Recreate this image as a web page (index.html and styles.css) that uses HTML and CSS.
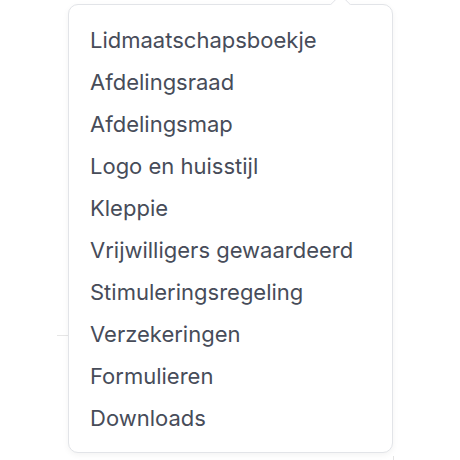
FILE: index.html
```html
<!DOCTYPE html>
<html lang="nl">
<head>
<meta charset="utf-8">
<link rel="stylesheet" href="styles.css">
</head>
<body>
<div class="page">
  <div class="rule"></div>
  <div class="card">
    <p class="card-text">Lidmaatschap</p>
  </div>
</div>
<nav class="dropdown">
  <span class="arrow"></span>
  <ul class="menu">
    <li><a href="#">Lidmaatschapsboekje</a></li>
    <li><a href="#">Afdelingsraad</a></li>
    <li><a href="#">Afdelingsmap</a></li>
    <li><a href="#">Logo en huisstijl</a></li>
    <li><a href="#">Kleppie</a></li>
    <li><a href="#">Vrijwilligers gewaardeerd</a></li>
    <li><a href="#">Stimuleringsregeling</a></li>
    <li><a href="#">Verzekeringen</a></li>
    <li><a href="#">Formulieren</a></li>
    <li><a href="#">Downloads</a></li>
  </ul>
</nav>
</body>
</html>
```
FILE: styles.css
```css
html, body {
  margin: 0;
  padding: 0;
  background: #ffffff;
  font-family: Inter, "Noto Sans", sans-serif;
  overflow: hidden;
  height: 460px;
}
.page {
  padding-top: 335px;
}
.rule {
  margin-left: 57px;
  width: 20px;
  border-top: 1px solid #e6e6e6;
}
.card {
  margin: 4px 0 0 57px;
  width: 337px;
  height: 200px;
  border-right: 1px solid #e3e3e3;
  box-sizing: border-box;
}
.card-text {
  margin: 120px 0 0 148px;
  font-size: 20px;
  line-height: 24px;
  color: #555;
}
.dropdown {
  position: absolute;
  top: 4px;
  left: 68px;
  width: 325px;
  height: 449px;
  box-sizing: border-box;
  background: #fff;
  border: 1px solid #e2e4e8;
  border-radius: 10px;
  box-shadow: 0 2px 6px rgba(0,0,0,0.05);
}
.arrow {
  position: absolute;
  top: -8px;
  left: 264px;
  width: 14px;
  height: 14px;
  background: #fff;
  border-top: 1px solid #e2e4e8;
  border-left: 1px solid #e2e4e8;
  border-top-left-radius: 3px;
  transform: rotate(45deg);
}
.menu {
  list-style: none;
  margin: 0;
  padding: 14px 21px 12px;
}
.menu li {
  height: 42px;
  display: flex;
  align-items: center;
}
.menu a {
  font-size: 22px;
  color: #474c59;
  text-decoration: none;
}
```
